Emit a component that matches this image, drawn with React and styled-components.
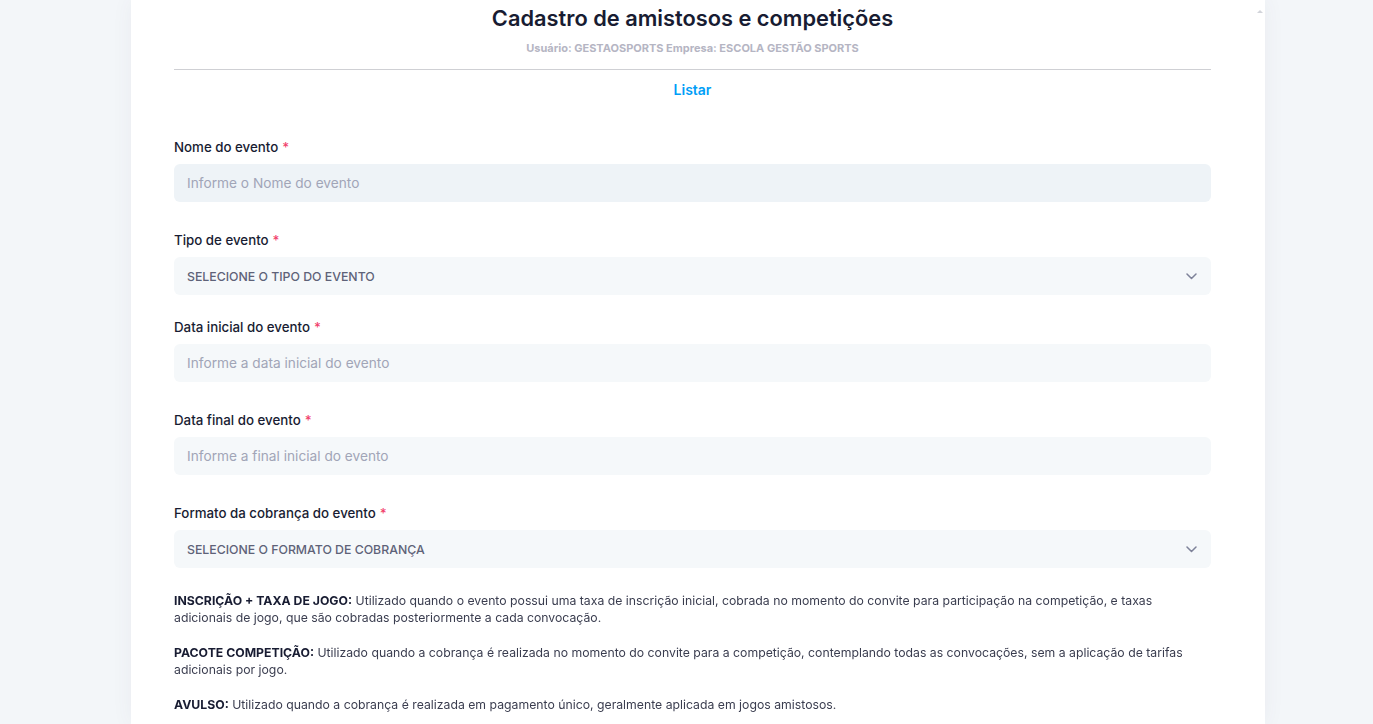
import React from "react";
import styled, { createGlobalStyle } from "styled-components";

const Global = createGlobalStyle`
  html, body { margin: 0; padding: 0; background: #f3f6f9; }
  body { font-family: Inter, "Noto Sans", sans-serif; overflow: hidden; }
  * { box-sizing: border-box; }
`;

const Page = styled.div`
  display: flex;
  padding: 0 108px 0 131px;
  height: 724px;
  overflow: hidden;
`;

const Card = styled.div`
  flex: 1;
  display: flex;
  background: #fff;
  box-shadow: 0 0 20px rgba(82, 63, 105, 0.06);
`;

const Content = styled.div`
  flex: 1;
  padding: 3px 44px 0 43px;
  display: flex;
  flex-direction: column;
`;

const Scrollbar = styled.div`
  width: 10px;
  display: flex;
  justify-content: center;
  padding-top: 10px;
`;

const ScrollArrow = styled.div`
  width: 0;
  height: 0;
  border-left: 3px solid transparent;
  border-right: 3px solid transparent;
  border-bottom: 3px solid #d2d4da;
`;

const Title = styled.h1`
  margin: 0;
  text-align: center;
  font-size: 21.8px;
  font-weight: 600;
  line-height: 30px;
  color: #181c32;
`;

const Subtitle = styled.div`
  text-align: center;
  font-size: 11px;
  font-weight: 700;
  color: #b5b5c3;
  margin-top: 8px;
  line-height: 14px;
`;

const Divider = styled.hr`
  border: 0;
  border-top: 1px solid #cfd0d4;
  margin: 14px 0 0 0;
`;

const LinkRow = styled.div`
  text-align: center;
  margin-top: 9px;
  line-height: 20px;
`;

const ListLink = styled.a`
  color: #009ef7;
  font-size: 14px;
  font-weight: 600;
  text-decoration: none;
`;

const Form = styled.div`
  margin-top: 37px;
  display: flex;
  flex-direction: column;
`;

const Field = styled.div`
  display: flex;
  flex-direction: column;
  margin-bottom: ${(p) => (p.$select ? "22px" : "28px")};
`;

const Label = styled.label`
  font-size: 13.3px;
  font-weight: 500;
  color: #181c32;
  line-height: 20px;
  margin-bottom: 7px;
`;

const Req = styled.span`
  color: #f1416c;
  margin-left: 4px;
`;

const Input = styled.input`
  height: 38px;
  border: 0;
  border-radius: 6px;
  background: ${(p) => (p.$focus ? "#eef3f7" : "#f5f8fa")};
  padding: 0 13px;
  font-family: Inter, sans-serif;
  font-size: 13.7px;
  color: #5e6278;
  outline: none;
  &::placeholder { color: #a1a5b7; }
`;

const Select = styled.div`
  height: 38px;
  border-radius: 6px;
  background: #f5f8fa;
  padding: 0 14px 0 13px;
  display: flex;
  align-items: center;
  justify-content: space-between;
  font-size: 12.3px;
  font-weight: 500;
  color: #5e6278;
`;

const Chevron = () => (
  <svg width="11" height="7" viewBox="0 0 11 7" fill="none">
    <path d="M1 1l4.5 4.5L10 1" stroke="#7e8299" strokeWidth="1.5" strokeLinecap="round" strokeLinejoin="round" />
  </svg>
);

const Notes = styled.div`
  margin-top: 2px;
  display: flex;
  flex-direction: column;
  gap: 18px;
`;

const Note = styled.p`
  margin: 0;
  font-size: 12.25px;
  line-height: 17px;
  color: #3a3d4f;
  b { color: #181c32; font-weight: 700; }
`;

export default function App() {
  return (
    <>
      <Global />
      <Page>
        <Card>
          <Content>
            <Title>Cadastro de amistosos e competições</Title>
            <Subtitle>Usuário: GESTAOSPORTS Empresa: ESCOLA GESTÃO SPORTS</Subtitle>
            <Divider />
            <LinkRow>
              <ListLink href="#">Listar</ListLink>
            </LinkRow>
            <Form>
              <Field>
                <Label>Nome do evento<Req>*</Req></Label>
                <Input $focus autoFocus placeholder="Informe o Nome do evento" />
              </Field>
              <Field $select>
                <Label>Tipo de evento<Req>*</Req></Label>
                <Select>SELECIONE O TIPO DO EVENTO<Chevron /></Select>
              </Field>
              <Field>
                <Label>Data inicial do evento<Req>*</Req></Label>
                <Input placeholder="Informe a data inicial do evento" />
              </Field>
              <Field>
                <Label>Data final do evento<Req>*</Req></Label>
                <Input placeholder="Informe a final inicial do evento" />
              </Field>
              <Field $select>
                <Label>Formato da cobrança do evento<Req>*</Req></Label>
                <Select>SELECIONE O FORMATO DE COBRANÇA<Chevron /></Select>
              </Field>
              <Notes>
                <Note>
                  <b>INSCRIÇÃO + TAXA DE JOGO:</b> Utilizado quando o evento possui uma taxa de inscrição inicial, cobrada no momento do convite para participação na competição, e taxas adicionais de jogo, que são cobradas posteriormente a cada convocação.
                </Note>
                <Note>
                  <b>PACOTE COMPETIÇÃO:</b> Utilizado quando a cobrança é realizada no momento do convite para a competição, contemplando todas as convocações, sem a aplicação de tarifas adicionais por jogo.
                </Note>
                <Note>
                  <b>AVULSO:</b> Utilizado quando a cobrança é realizada em pagamento único, geralmente aplicada em jogos amistosos.
                </Note>
              </Notes>
            </Form>
          </Content>
          <Scrollbar>
            <ScrollArrow />
          </Scrollbar>
        </Card>
      </Page>
    </>
  );
}
